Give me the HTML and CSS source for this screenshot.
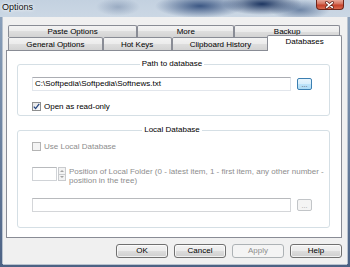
FILE: index.html
```html
<!DOCTYPE html>
<html lang="en">
<head>
  <meta charset="UTF-8" />
  <title>Options</title>
  <link rel="stylesheet" href="styles.css">
</head>
<body>
  <div class="window">
    <div class="titlebar">
      <span class="title">Options</span>
      <span class="close-btn">
        <svg width="28" height="10" viewBox="0 0 28 10">
          <path d="M11 2.5 L17 7.5 M17 2.5 L11 7.5" stroke="#5a2018" stroke-width="3.2" stroke-linecap="round" fill="none"/>
          <path d="M11 2.5 L17 7.5 M17 2.5 L11 7.5" stroke="#fff" stroke-width="1.6" stroke-linecap="round" fill="none"/>
        </svg>
      </span>
    </div>

    <div class="client">
      <div class="tabs">
        <div class="tab-row back">
          <div class="tab">Paste Options</div>
          <div class="tab">More</div>
          <div class="tab">Backup</div>
        </div>
        <div class="tab-row front">
          <div class="tab">General Options</div>
          <div class="tab">Hot Keys</div>
          <div class="tab">Clipboard History</div>
          <div class="tab active">Databases</div>
        </div>
      </div>

      <div class="panel">
        <fieldset class="group">
          <legend>Path to database</legend>
          <div class="path-row">
            <div class="textbox">C:\Softpedia\Softpedia\Softnews.txt</div>
            <div class="browse-btn hot">...</div>
          </div>
          <div class="check-row">
            <span class="checkbox">
              <svg width="7" height="7" viewBox="0 0 7 7">
                <path d="M0.8 3.6 L2.6 5.6 L6.2 0.9" stroke="#24447e" stroke-width="1.3" fill="none"/>
              </svg>
            </span>
            Open as read-only
          </div>
        </fieldset>

        <fieldset class="group">
          <legend>Local Database</legend>
          <div class="check-row disabled">
            <span class="checkbox"></span>
            Use Local Database
          </div>
          <div class="spin-row">
            <div class="spin">
              <div class="spin-edit"></div>
              <div class="spin-arrows">
                <span class="arrow up"></span>
                <span class="arrow down"></span>
              </div>
            </div>
            <div class="spin-label">Position of Local Folder (0 - latest item, 1 - first item, any other number -<br>position in the tree)</div>
          </div>
          <div class="path-row">
            <div class="textbox disabled"></div>
            <div class="browse-btn disabled">...</div>
          </div>
        </fieldset>
      </div>

      <div class="buttons">
        <div class="btn">OK</div>
        <div class="btn">Cancel</div>
        <div class="btn disabled">Apply</div>
        <div class="btn">Help</div>
      </div>
    </div>
  </div>
</body>
</html>
```

FILE: styles.css
```css
* {
  margin: 0;
  padding: 0;
  box-sizing: border-box;
}

body {
  font-family: 'Liberation Sans', Arial, sans-serif;
  font-size: 8px;
  color: #000;
  background: #fff;
}

.window {
  width: 350px;
  height: 267px;
  display: flex;
  flex-direction: column;
  background: linear-gradient(to bottom, #8ea4be, #4c6284);
  overflow: hidden;
}

/* title bar */
.titlebar {
  height: 17px;
  display: flex;
  justify-content: space-between;
  align-items: flex-start;
  background:
    radial-gradient(ellipse 22px 9px at 118px 7px, rgba(70, 95, 135, 0.35), transparent),
    radial-gradient(ellipse 45px 12px at 200px 6px, rgba(35, 65, 115, 0.85), transparent),
    radial-gradient(ellipse 40px 11px at 262px 4px, rgba(20, 45, 90, 0.95), transparent),
    radial-gradient(ellipse 30px 10px at 300px 10px, rgba(50, 80, 125, 0.6), transparent),
    linear-gradient(to bottom, #c3d1e0, #cbd7e4);
}

.title {
  font-size: 9px;
  line-height: 14px;
  padding-left: 2px;
  color: #111;
  text-shadow: 0 0 3px #fff, 0 0 5px #fff;
}

.close-btn {
  width: 28px;
  height: 10px;
  margin-right: 6px;
  border: 1px solid #6f2519;
  border-top: none;
  border-radius: 0 0 4px 4px;
  background: linear-gradient(to bottom, #e9a99a, #d4705c 45%, #c4402a 55%, #d86a4e);
  display: flex;
}

.close-btn svg {
  margin-left: -1px;
}

/* client area */
.client {
  flex: 1;
  margin: 0 3px 3px 3px;
  padding: 8px 5px 0 3px;
  background: #f0f0f0;
  display: flex;
  flex-direction: column;
  box-shadow: -1px 0 0 #b9c3cf, 1px 0 0 #b9c3cf, 0 1px 0 #b9c3cf;
}

/* tabs */
.tabs {
  padding: 0 2px;
}

.tab-row {
  display: flex;
  align-items: flex-start;
}

.tab {
  flex: 1 1 auto;
  text-align: center;
  border: 1px solid #898c95;
  border-bottom: none;
  border-radius: 2px 2px 0 0;
  background: linear-gradient(to bottom, #f3f3f3, #ebebeb 50%, #dedede 50%, #d3d3d3);
}

.back .tab {
  height: 12px;
  line-height: 12px;
}

.front {
  height: 13px;
}

.front .tab {
  height: 13px;
  line-height: 13px;
}

.front .tab.active {
  position: relative;
  z-index: 1;
  height: 16px;
  margin: -2px -2px 0 -2px;
  line-height: 12px;
  background: #fff;
}

/* tab panel */
.panel {
  flex: 1;
  background: #fff;
  border: 1px solid #898c95;
  padding: 8px 11px 9px 10px;
}

.group {
  border: 1px solid #d5dfe5;
  border-radius: 3px;
  padding: 8px 17px 4px 14px;
  min-width: 0;
}

.group + .group {
  margin-top: 9px;
  padding-top: 6px;
  padding-bottom: 15px;
}

.group legend {
  margin: 0 auto;
  padding: 0 2px;
  line-height: 10px;
}

.path-row {
  display: flex;
  align-items: center;
  gap: 6px;
}

.textbox {
  flex: 1;
  height: 14px;
  line-height: 12px;
  padding-left: 2px;
  border: 1px solid #e2e6ec;
  border-top-color: #abadb3;
  background: #fff;
}

.textbox.disabled {
  border-color: #d4d6d9;
  border-top-color: #b8babd;
}

.browse-btn {
  width: 15px;
  height: 12px;
  font-size: 7px;
  line-height: 11px;
  text-align: center;
  color: #555;
  border: 1px solid #707070;
  border-radius: 2px;
}

.browse-btn.hot {
  border-color: #3c7fb1;
  background: linear-gradient(to bottom, #e8f5fd, #d8effc 50%, #bfe4fa 50%, #aedcf6);
}

.browse-btn.disabled {
  border-color: #c2c5c8;
  background: #f4f4f4;
  color: #a0a0a0;
}

.check-row {
  display: flex;
  align-items: center;
  gap: 3px;
  height: 10px;
  margin-top: 10px;
}

.group + .group .check-row {
  margin-top: 0;
}

.checkbox {
  width: 9px;
  height: 9px;
  border: 1px solid #8e8f8f;
  background: linear-gradient(135deg, #e4e4e4, #fcfcfc);
  display: flex;
  align-items: center;
  justify-content: center;
}

.check-row.disabled {
  color: #8d8d8d;
}

.check-row.disabled .checkbox {
  border-color: #b4b4b4;
  background: #f4f4f4;
}

.spin-row {
  display: flex;
  align-items: flex-start;
  gap: 3px;
  margin-top: 16px;
}

.spin {
  display: flex;
  gap: 1px;
}

.spin-edit {
  width: 25px;
  height: 14px;
  border: 1px solid #d0d3d7;
  border-top-color: #b8babd;
  background: #fff;
}

.spin-arrows {
  width: 8px;
  height: 14px;
  display: flex;
  flex-direction: column;
  border: 1px solid #c9cbce;
  background: #f3f3f3;
}

.arrow {
  flex: 1;
  display: flex;
  align-items: center;
  justify-content: center;
}

.arrow.up {
  border-bottom: 1px solid #c9cbce;
}

.arrow::before {
  content: '';
  border-left: 2px solid transparent;
  border-right: 2px solid transparent;
}

.arrow.up::before {
  border-bottom: 2px solid #a3a3a3;
}

.arrow.down::before {
  border-top: 2px solid #a3a3a3;
}

.spin-label {
  color: #8d8d8d;
  line-height: 9px;
  white-space: nowrap;
}

.group .path-row + .path-row,
.spin-row + .path-row {
  margin-top: 13px;
}

/* dialog buttons */
.buttons {
  display: flex;
  justify-content: flex-end;
  gap: 6px;
  margin-top: 6px;
  margin-bottom: 6px;
}

.btn {
  width: 52px;
  height: 14px;
  line-height: 12px;
  text-align: center;
  border: 1px solid #707070;
  border-radius: 3px;
  background: linear-gradient(to bottom, #f2f2f2, #ebebeb 50%, #dddddd 50%, #cfcfcf);
  box-shadow: inset 0 0 0 1px rgba(255, 255, 255, 0.7);
}

.btn.disabled {
  border-color: #adb2b5;
  background: #f4f4f4;
  color: #8d8d8d;
  box-shadow: none;
}
```
